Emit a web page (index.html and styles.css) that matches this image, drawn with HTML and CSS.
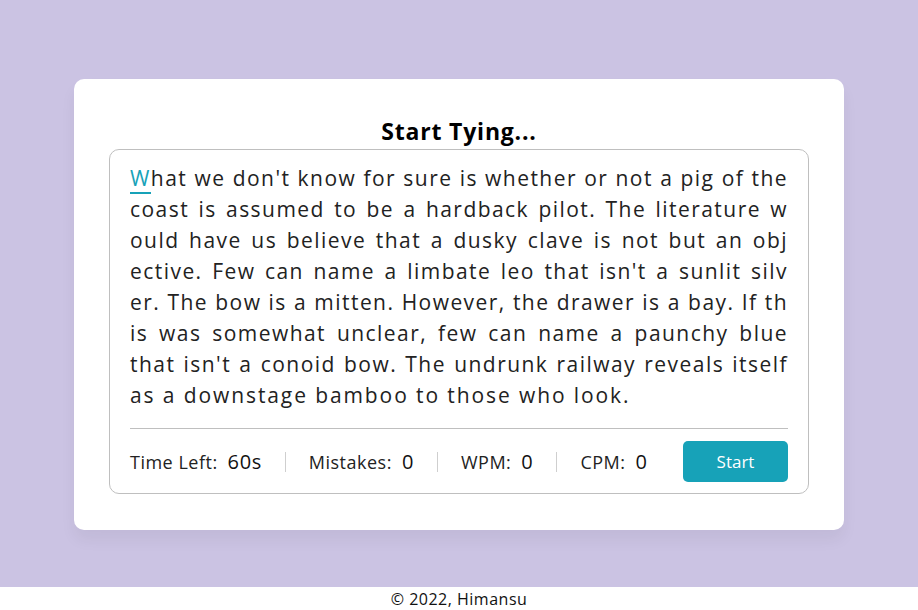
FILE: index.html
```html
<!DOCTYPE html>
<html lang="en">
<head>
<meta charset="utf-8">
<title>Typing Test</title>
<link rel="stylesheet" href="styles.css">
</head>
<body>
<main class="page">
  <section class="card">
    <h1 class="title">Start Tying...</h1>
    <div class="box">
      <div class="text">
        <div class="line"><span class="active">W</span>hat we don't know for sure is whether or not a pig of the</div>
        <div class="line">coast is assumed to be a hardback pilot. The literature w</div>
        <div class="line">ould have us believe that a dusky clave is not but an obj</div>
        <div class="line">ective. Few can name a limbate leo that isn't a sunlit silv</div>
        <div class="line">er. The bow is a mitten. However, the drawer is a bay. If th</div>
        <div class="line">is was somewhat unclear, few can name a paunchy blue</div>
        <div class="line">that isn't a conoid bow. The undrunk railway reveals itself</div>
        <div class="line last">as a downstage bamboo to those who look.</div>
      </div>
      <div class="stats">
        <ul class="list">
          <li class="stat"><span class="label">Time Left:</span><span class="value">60s</span></li>
          <li class="stat"><span class="label">Mistakes:</span><span class="value">0</span></li>
          <li class="stat"><span class="label">WPM:</span><span class="value">0</span></li>
          <li class="stat"><span class="label">CPM:</span><span class="value">0</span></li>
        </ul>
        <button class="btn">Start</button>
      </div>
    </div>
  </section>
</main>
<footer class="footer">© 2022, Himansu</footer>
</body>
</html>
```
FILE: styles.css
```css
* { box-sizing: border-box; }
body {
  margin: 0;
  font-family: "Open Sans", "Liberation Sans", sans-serif;
  color: #1f1f1f;
  background: #fff;
}
.page {
  height: 587px;
  background: #cbc3e3;
  display: flex;
  justify-content: center;
  align-items: flex-start;
  padding-top: 79px;
}
.card {
  width: 770px;
  background: #fff;
  border-radius: 10px;
  padding: 35px 35px 36px;
  box-shadow: 0 10px 15px rgba(0, 0, 0, 0.05);
}
.title {
  margin: 0;
  height: 35px;
  line-height: 35px;
  text-align: center;
  font-size: 23px;
  font-weight: 700;
  letter-spacing: 0.8px;
  color: #000;
}
.box {
  border: 1px solid #bfbfbf;
  border-radius: 10px;
  padding: 13px 20px 11px;
}
.text {
  font-size: 21px;
  line-height: 31px;
  letter-spacing: 1.45px;
  color: #222;
}
.line {
  text-align: justify;
  text-align-last: justify;
  white-space: nowrap;
}
.line.last {
  text-align-last: left;
  letter-spacing: 1.9px;
}
.active {
  color: #17a2b8;
  border-bottom: 2px solid #17a2b8;
}
.stats {
  margin-top: 17px;
  border-top: 1px solid #bfbfbf;
  padding-top: 12px;
  display: flex;
  justify-content: space-between;
  align-items: center;
}
.list {
  list-style: none;
  margin: 0;
  padding: 0;
  display: flex;
  align-items: center;
}
.stat {
  display: flex;
  align-items: center;
  gap: 10px;
  padding: 0 23px;
  border-left: 1px solid #cfcfcf;
  height: 20px;
}
.stat:first-child { padding-left: 0; border-left: none; }
.label {
  font-size: 18px;
  letter-spacing: 0.5px;
  color: #222;
}
.value {
  font-size: 20px;
  letter-spacing: 0.6px;
  color: #111;
}
.btn {
  width: 105px;
  height: 41px;
  border: none;
  border-radius: 5px;
  background: #17a2b8;
  color: #fff;
  font-family: inherit;
  font-size: 17px;
  cursor: pointer;
}
.footer {
  height: 23px;
  line-height: 24px;
  text-align: center;
  font-size: 16px;
  letter-spacing: 0.5px;
  color: #111;
}
```
